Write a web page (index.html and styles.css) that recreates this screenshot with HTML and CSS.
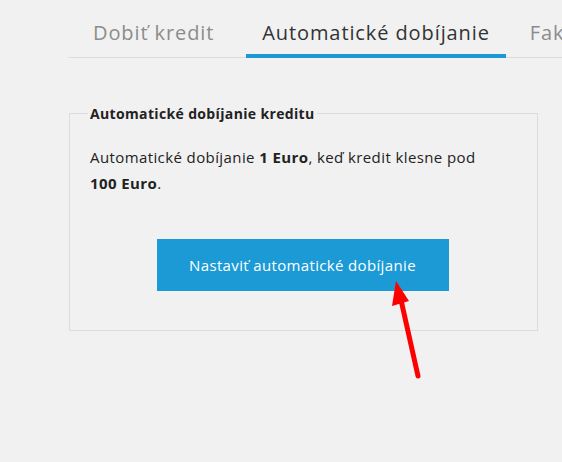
FILE: index.html
```html
<!DOCTYPE html>
<html lang="sk">
<head>
<meta charset="utf-8">
<link rel="stylesheet" href="styles.css">
</head>
<body>
<div class="page">
  <nav class="tabs">
    <span class="tab">Dobiť kredit</span>
    <span class="tab active">Automatické dobíjanie</span>
    <span class="tab">Faktúry</span>
  </nav>
  <fieldset class="box">
    <legend class="box-title">Automatické dobíjanie kreditu</legend>
    <p class="desc">Automatické dobíjanie <b>1&nbsp;Euro</b>, keď kredit klesne pod <b class="nowrap">100 Euro</b>.</p>
    <div class="actions">
      <button class="btn">Nastaviť automatické dobíjanie</button>
    </div>
  </fieldset>
</div>
<svg class="arrow" width="40" height="110" viewBox="0 0 40 110">
  <line x1="35" y1="96" x2="18" y2="20" stroke="#ff0000" stroke-width="5" stroke-linecap="round"/>
  <polygon points="13,1 9,26 26,21" fill="#ff0000"/>
</svg>
</body>
</html>
```

FILE: styles.css
```css
html, body {
  margin: 0;
  padding: 0;
  background: #f1f1f1;
  font-family: "Open Sans", "Noto Sans", sans-serif;
  color: #222;
}
.page {
  padding-left: 68px;
  padding-top: 16px;
  width: 494px;
  overflow: hidden;
}
.tabs {
  display: flex;
  white-space: nowrap;
  border-bottom: 1px solid #dcdcdc;
  padding-left: 9px;
}
.tab {
  font-size: 20px;
  line-height: 26px;
  letter-spacing: 0.9px;
  padding: 4px 16px 8px;
  color: #8c8c8c;
  border-bottom: 4px solid transparent;
  margin-bottom: -1px;
  margin-right: 16px;
}
.tab.active {
  color: #333;
  border-bottom-color: #1b98d5;
  margin-right: 8px;
}
.box {
  margin: 46px 0 0 1px;
  width: 469px;
  box-sizing: border-box;
  border: 1px solid #dcdcdc;
  padding: 0 20px 39px 18px;
}
.box-title {
  font-size: 14px;
  font-weight: 700;
  letter-spacing: 0.35px;
  padding: 0 2px;
  color: #222;
}
.desc {
  font-size: 15px;
  line-height: 26px;
  letter-spacing: 0.4px;
  margin: 21px 0 0 0;
  padding-left: 2px;
  color: #222;
}
.desc b { font-weight: 700; }
.nowrap { white-space: nowrap; }
.actions {
  display: flex;
  justify-content: center;
  margin-top: 43px;
}
.btn {
  width: 292px;
  height: 52px;
  border: 0;
  background: #1b9ad6;
  color: #fff;
  font-family: inherit;
  font-size: 15px;
  letter-spacing: 0.35px;
  padding: 0;
}
.arrow {
  position: absolute;
  left: 383px;
  top: 280px;
}
```
